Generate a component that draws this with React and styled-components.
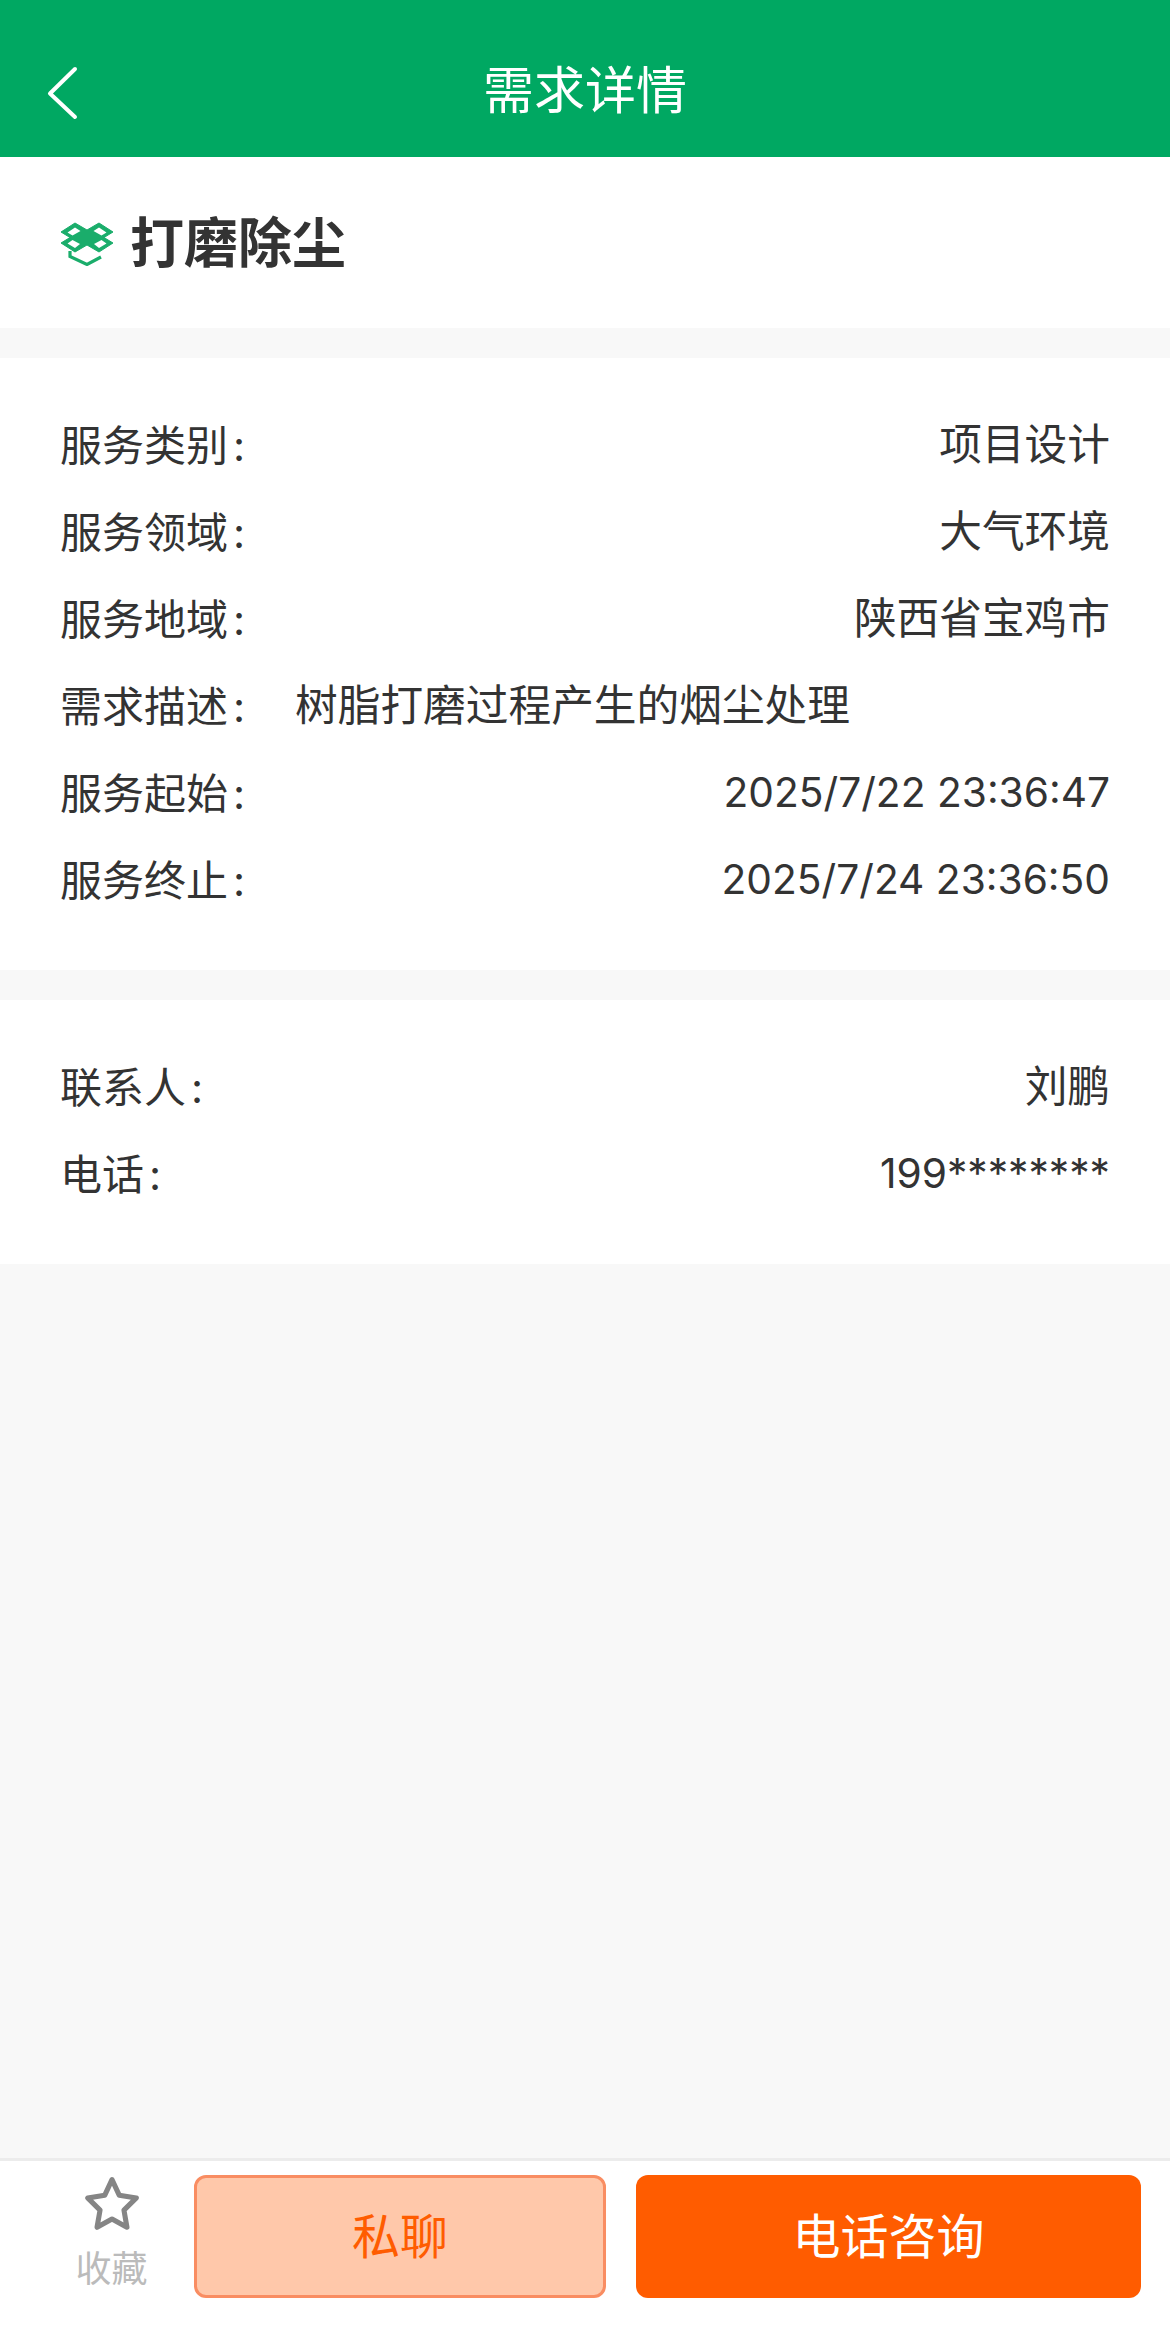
import React from 'react';
import styled, { createGlobalStyle } from 'styled-components';

const FONT = '"Inter", "Noto Sans CJK SC", "Liberation Sans", sans-serif';

const Global = createGlobalStyle`
  html, body { margin: 0; padding: 0; background: #f8f8f8; }
  * { box-sizing: border-box; }
  body { font-family: ${FONT}; }
`;
const Page = styled.div`
  width: 1170px; height: 2348px; display: flex; flex-direction: column; background: #f8f8f8; overflow: hidden;
`;
const Header = styled.header`
  height: 157px; background: #00a862; display: flex; align-items: center; justify-content: center;
  position: relative; padding-top: 24px;
`;
const HeaderTitle = styled.h1`
  margin: 0; font-size: 51px; font-weight: 400; color: #fff; line-height: 1;
`;
const BackBtn = styled.svg`
  position: absolute; left: 46px; top: 66px; width: 32px; height: 54px;
`;
const TitleCard = styled.section`
  height: 171px; background: #fff; display: flex; align-items: center; padding: 2px 60px 0; gap: 16px;
`;
const TitleText = styled.h2`
  margin: 0; font-size: 54px; font-weight: 700; color: #333; line-height: 1;
`;
const Card = styled.section`
  margin-top: 30px; background: #fff; padding: 44px 60px 46px; display: flex; flex-direction: column;
`;
const Row = styled.div`
  height: 87px; display: flex; align-items: center; justify-content: space-between;
  color: #333; line-height: 1;
`;
const Label = styled.span`
  display: inline-flex; align-items: center; font-size: 42px; flex: none;
`;
const Colon = styled.span`
  width: 48px; padding-left: 5px;
`;
const Value = styled.span`
  font-size: ${p => p.$latin ? '40.7px' : '42.7px'};
  flex: ${p => p.$left ? 1 : 'none'}; text-align: ${p => p.$left ? 'left' : 'right'};
  padding-left: ${p => p.$left ? '19px' : 0};
`;
const Spacer = styled.div` flex: 1; `;
const Footer = styled.footer`
  height: 190px; background: #fff; border-top: 3px solid #ececec; display: flex; align-items: flex-start;
  padding: 14px 0 0 0; gap: 30px;
`;
const Fav = styled.div`
  width: 165px; margin-right: -30px; height: 123px; margin-left: 29px; display: flex; flex-direction: column; align-items: center; flex: none;
`;
const FavIcon = styled.svg` width: 62px; height: 62px; display: block; margin-top: -2px; flex: none; `;
const FavText = styled.span` font-size: 36px; line-height: 1; color: #bbb; margin-top: 16px; `;
const Btn = styled.button`
  height: 123px; border-radius: 12px; font-family: inherit; font-size: 48px; padding: 0; line-height: 1;
  width: ${p => p.$w}px; flex: none;
  background: ${p => p.$solid ? '#ff5c00' : '#ffc8aa'};
  color: ${p => p.$solid ? '#fff' : '#ff5c00'};
  border: ${p => p.$solid ? 'none' : '3px solid #f98d62'};
`;
const LogoIcon = styled.svg` flex: none; width: 54px; height: 44px; `;

const Logo = () => (
  <LogoIcon viewBox="0 0 54 44" fill="none">
    <path d="M15 1 L27 8 L39 1 L53 10 L44 15.5 L53 21 L39 30 L27 23 L15 30 L1 21 L10 15.5 L1 10 Z" fill="#1aad6b" stroke="#1aad6b" strokeWidth="1" strokeLinejoin="round"/>
    <path d="M15 5.5 L7.5 10.5 L12.5 13.5 L20.5 9 Z M39 5.5 L46.5 10.5 L41.5 13.5 L33.5 9 Z M12.5 18 L7.5 21.5 L15 26 L20 22 Z M41.5 18 L46.5 21.5 L39 26 L34 22 Z" fill="#fff"/>
    <path d="M10 29 V34.5 L27 42.5 L41 35" stroke="#1aad6b" strokeWidth="3.2"/>
  </LogoIcon>
);

const details = [
  ['服务类别', '项目设计'],
  ['服务领域', '大气环境'],
  ['服务地域', '陕西省宝鸡市'],
  ['需求描述', '树脂打磨过程产生的烟尘处理', true],
  ['服务起始', '2025/7/22 23:36:47', false, true],
  ['服务终止', '2025/7/24 23:36:50', false, true],
];
const contacts = [['联系人', '刘鹏'], ['电话', '199********', false, true]];

const InfoRow = ({ label, value, left, latin }) => (
  <Row>
    <Label>{label}<Colon>:</Colon></Label>
    <Value $left={left} $latin={latin}>{value}</Value>
  </Row>
);

export default function App() {
  return (
    <Page>
      <Global />
      <Header>
        <BackBtn viewBox="0 0 32 54" fill="none">
          <path d="M29 3 L4 27.5 L29 51" stroke="#fff" strokeWidth="4" strokeLinecap="round" strokeLinejoin="round"/>
        </BackBtn>
        <HeaderTitle>需求详情</HeaderTitle>
      </Header>
      <TitleCard>
        <Logo />
        <TitleText>打磨除尘</TitleText>
      </TitleCard>
      <Card>
        {details.map(([l, v, left, latin]) => <InfoRow key={l} label={l} value={v} left={left} latin={latin} />)}
      </Card>
      <Card>
        {contacts.map(([l, v, left, latin]) => <InfoRow key={l} label={l} value={v} left={left} latin={latin} />)}
      </Card>
      <Spacer />
      <Footer>
        <Fav>
          <FavIcon viewBox="0 0 56 56" fill="none">
            <path d="M28 6 L34.5 20 L50 22.5 L38.8 33.5 L41.5 49 L28 41.5 L14.5 49 L17.2 33.5 L6 22.5 L21.5 20 Z" stroke="#858585" strokeWidth="4.6" strokeLinejoin="round"/>
          </FavIcon>
          <FavText>收藏</FavText>
        </Fav>
        <Btn $w={412}>私聊</Btn>
        <Btn $solid $w={505}>电话咨询</Btn>
      </Footer>
    </Page>
  );
}
